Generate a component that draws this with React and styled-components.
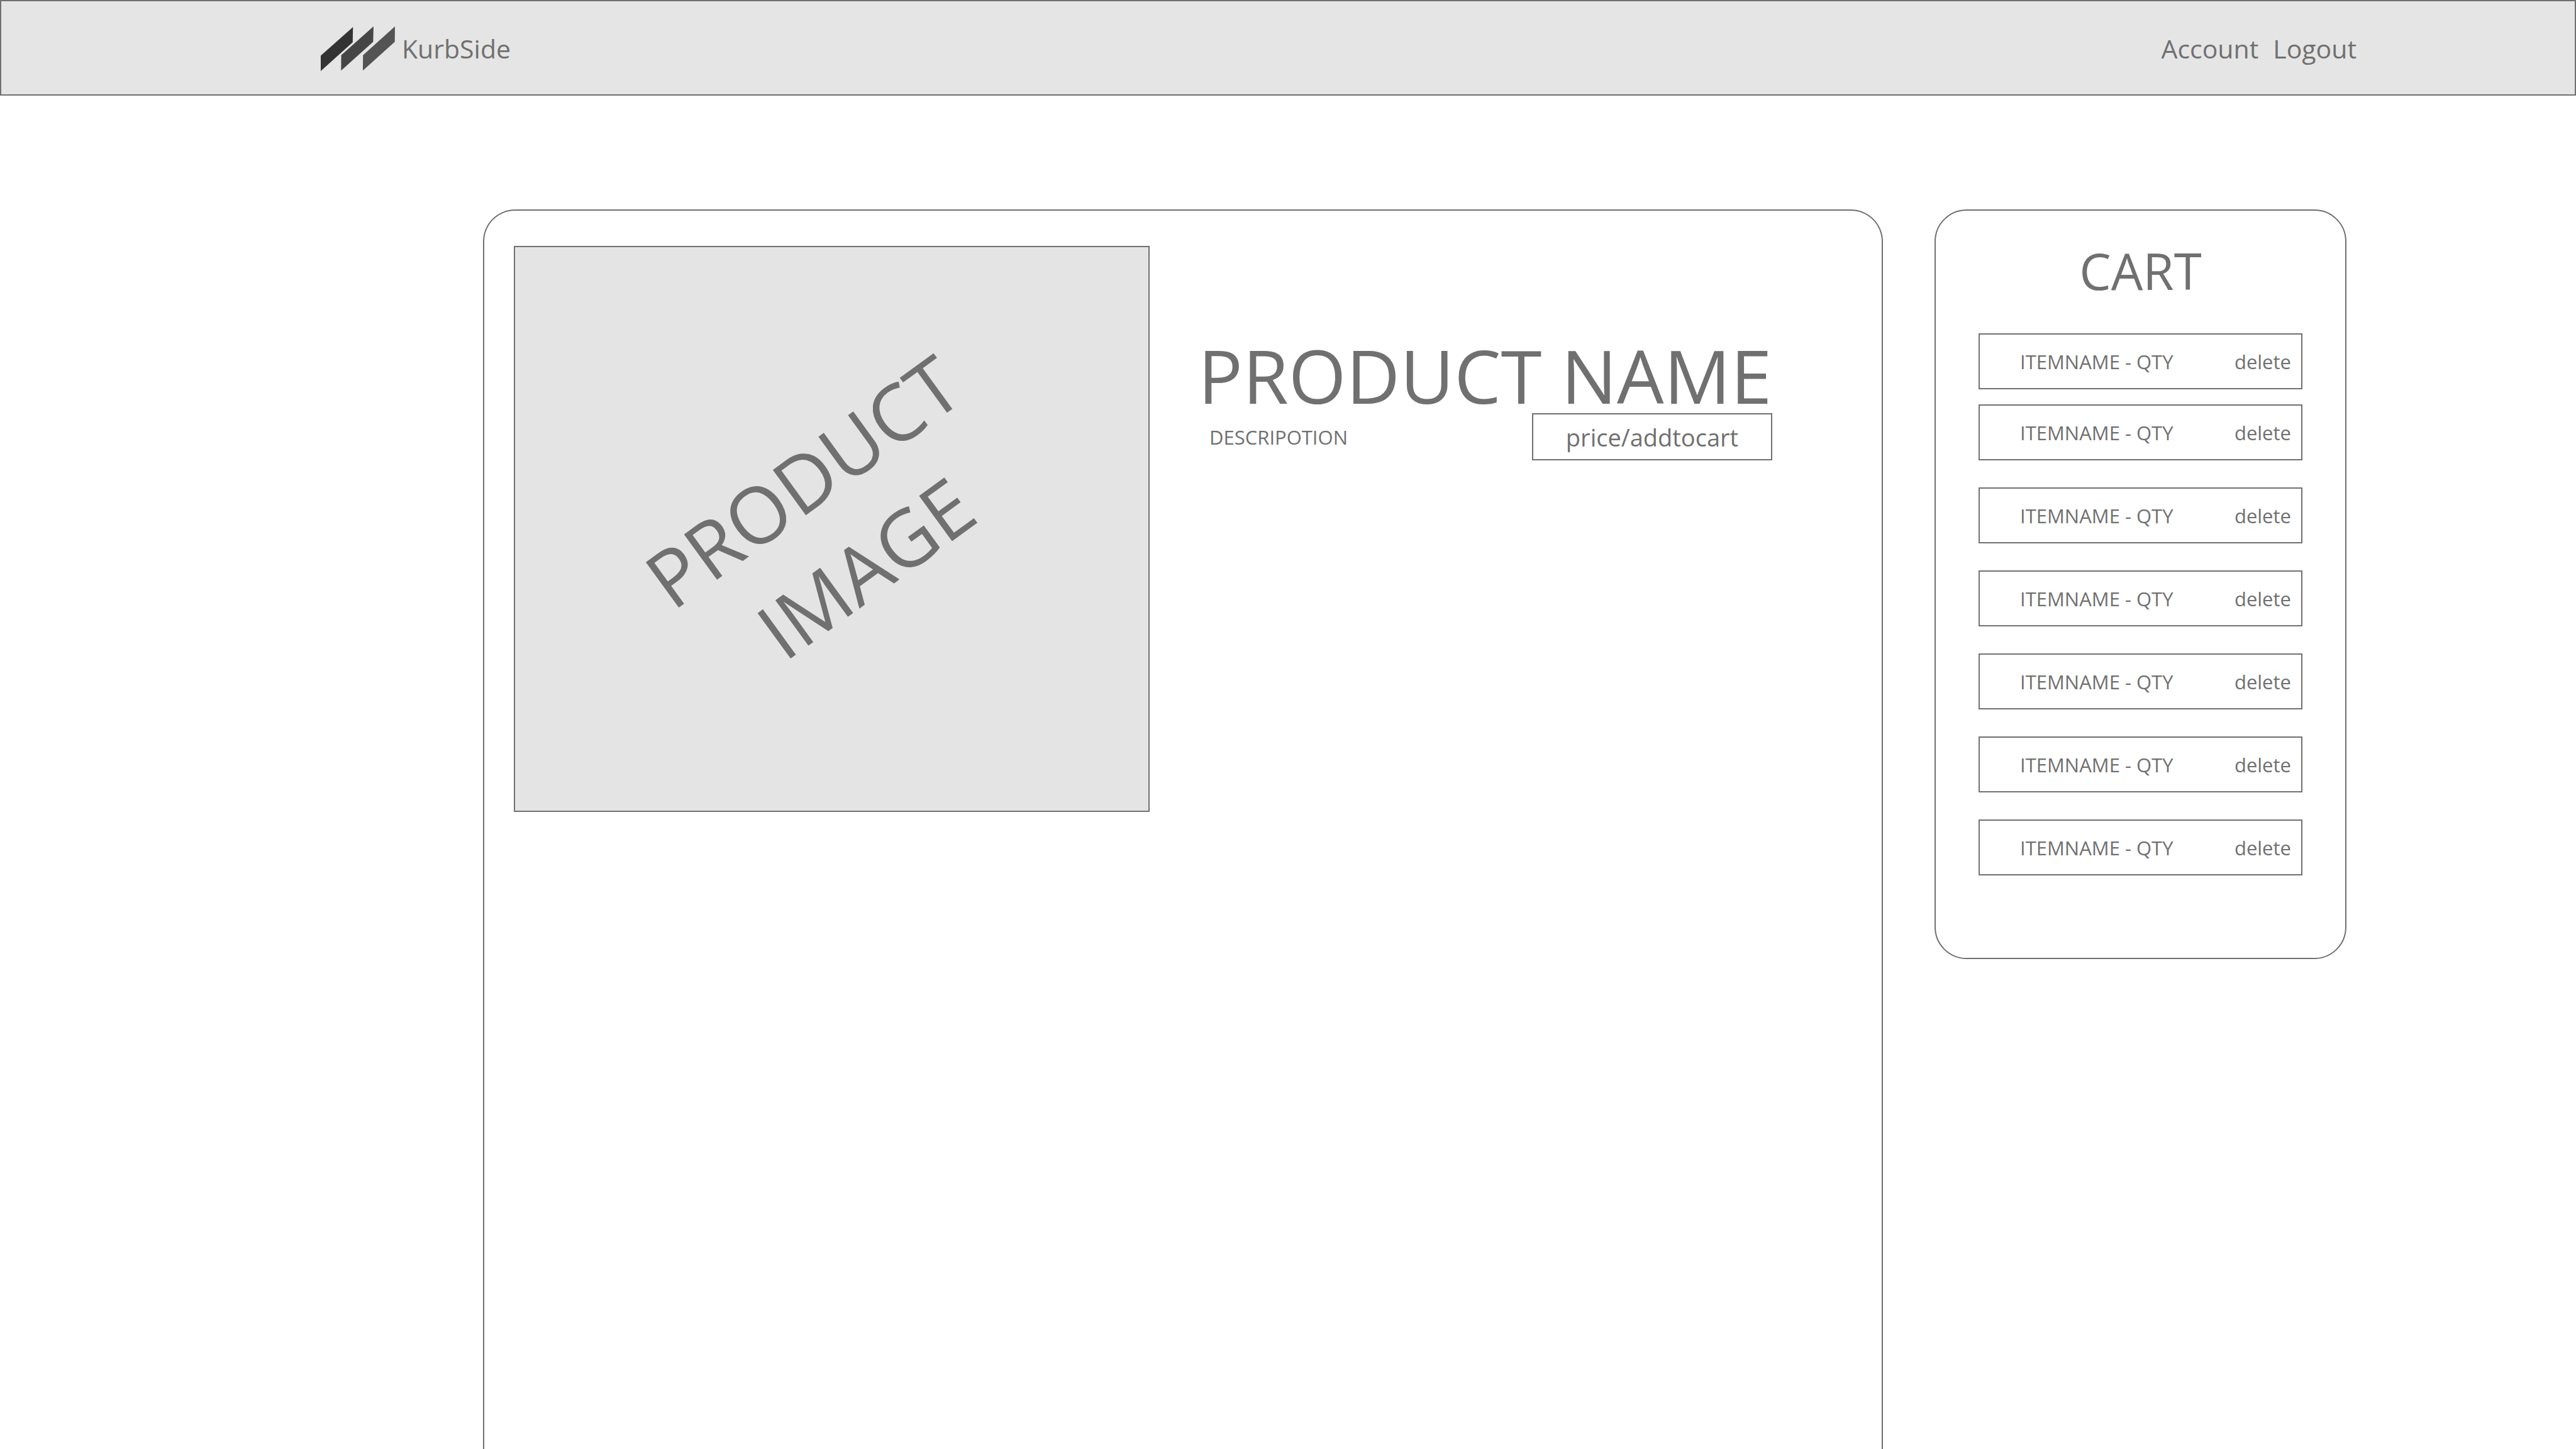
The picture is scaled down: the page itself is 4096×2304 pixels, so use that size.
import React from "react";
import styled, { createGlobalStyle } from "styled-components";

const ink = "#707070";
const line = `2px solid ${ink}`;

const GlobalStyle = createGlobalStyle`
  *, *::before, *::after { box-sizing: border-box; }
  body {
    margin: 0;
    background: #fff;
    color: ${ink};
    font-family: "Open Sans", "Noto Sans", sans-serif;
    font-size: 31px;
    line-height: 42px;
  }
  h1, h2, p, ul { margin: 0; padding: 0; font-weight: 400; }
  button {
    font-family: inherit;
    color: inherit;
    background: none;
    margin: 0;
    cursor: pointer;
  }
`;

const Page = styled.div`
  min-height: 100vh;
  display: flex;
  flex-direction: column;
`;

const Header = styled.header`
  height: 152px;
  padding: 2px 347px 0 508px;
  display: flex;
  align-items: center;
  justify-content: space-between;
  background: #e5e5e5;
  border: ${line};
  font-size: 41px;
  line-height: 56px;
`;

const Brand = styled.a`
  display: flex;
  align-items: center;
  gap: 11px;
  color: inherit;
  text-decoration: none;
`;

const LogoMark = styled.svg`
  display: block;
  width: 118px;
  height: 71px;
`;

const Nav = styled.nav`
  display: flex;
  gap: 23px;
`;

const NavLink = styled.a`
  color: inherit;
  text-decoration: none;
`;

const Main = styled.main`
  flex: 1;
  display: grid;
  grid-template-columns: minmax(0, 1fr) 655px;
  gap: 82px;
  padding: 181px 365px 0 768px;
`;

const Panel = styled.section`
  border: ${line};
  border-radius: 51px;
  padding-top: 56px;
`;

const ProductPanel = styled(Panel)`
  display: flex;
  align-items: flex-start;
  gap: 77px;
  padding-left: 47px;
  border-bottom: 0;
  border-bottom-left-radius: 0;
  border-bottom-right-radius: 0;
`;

const ProductImage = styled.div`
  flex: none;
  width: 1011px;
  height: 900px;
  padding: 0 0 16px 6px;
  display: flex;
  align-items: center;
  justify-content: center;
  background: #e4e4e4;
  border: ${line};
`;

const ImageCaption = styled.p`
  transform: rotate(-36deg);
  font-size: 125px;
  line-height: 170px;
  text-align: center;
`;

const ProductInfo = styled.div`
  flex: 1;
  max-width: 913px;
  padding-top: 146px;
`;

const ProductName = styled.h1`
  font-size: 118px;
  line-height: 120px;
  white-space: nowrap;
`;

const ProductRow = styled.div`
  display: flex;
  align-items: center;
  justify-content: space-between;
  padding-left: 18px;
`;

const AddToCart = styled.button`
  width: 382px;
  height: 75px;
  padding: 0;
  border: ${line};
  font-size: 38px;
  line-height: 56px;
`;

const CartPanel = styled(Panel)`
  align-self: start;
  padding-left: 68px;
  padding-right: 68px;
  padding-bottom: 131px;
`;

const CartTitle = styled.h2`
  margin-bottom: 61px;
  font-size: 80px;
  line-height: 78px;
  text-align: center;
`;

const CartList = styled.ul`
  display: flex;
  flex-direction: column;
  gap: 43px;
  list-style: none;
`;

const CartItem = styled.li`
  height: 89px;
  display: flex;
  align-items: center;
  justify-content: space-between;
  padding: 0 16px 0 64px;
  border: ${line};

  &:first-child {
    margin-bottom: -19px;
  }
`;

const DeleteButton = styled.button`
  padding: 0;
  border: 0;
  font-size: 31px;
  line-height: 42px;
`;

const items = [1, 2, 3, 4, 5, 6, 7];

export default function App() {
  return (
    <Page>
      <GlobalStyle />
      <Header>
        <Brand href="#">
          <LogoMark viewBox="0 0 460 276" preserveAspectRatio="none" aria-hidden="true">
            <path fill="#333" d="M0 181 200 4 198 98 0 276Z" />
            <path fill="#464646" d="M127 178 327 0 325 95 126 273Z" />
            <path fill="#545454" d="M262 178 460 0 459 95 261 273Z" />
          </LogoMark>
          KurbSide
        </Brand>
        <Nav>
          <NavLink href="#">Account</NavLink>
          <NavLink href="#">Logout</NavLink>
        </Nav>
      </Header>
      <Main>
        <ProductPanel>
          <ProductImage>
            <ImageCaption>
              PRODUCT
              <br />
              IMAGE
            </ImageCaption>
          </ProductImage>
          <ProductInfo>
            <ProductName>PRODUCT NAME</ProductName>
            <ProductRow>
              <p>DESCRIPOTION</p>
              <AddToCart type="button">price/addtocart</AddToCart>
            </ProductRow>
          </ProductInfo>
        </ProductPanel>
        <CartPanel>
          <CartTitle>CART</CartTitle>
          <CartList>
            {items.map((id) => (
              <CartItem key={id}>
                <span>ITEMNAME - QTY</span>
                <DeleteButton type="button">delete</DeleteButton>
              </CartItem>
            ))}
          </CartList>
        </CartPanel>
      </Main>
    </Page>
  );
}
